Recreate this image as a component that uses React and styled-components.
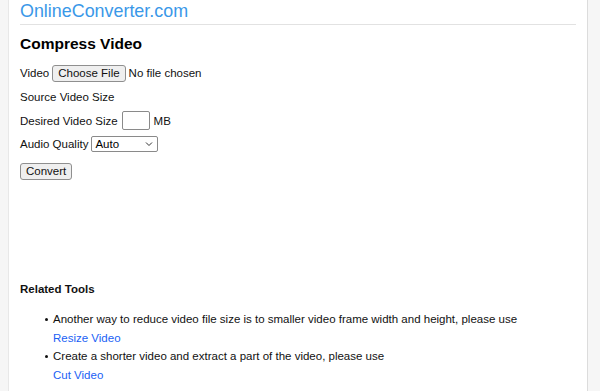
import React from "react";
import styled, { createGlobalStyle } from "styled-components";

const Global = createGlobalStyle`
  html, body { margin: 0; padding: 0; background: #f6f6f6; }
  body { font-family: "Liberation Sans", Arial, sans-serif; color: #111; }
  * { box-sizing: border-box; }
`;

const Page = styled.div`
  margin-left: 8px;
  width: 580px;
  min-height: 391px;
  background: #fff;
  border-left: 1px solid #e8e8e8;
  border-right: 1px solid #dcdcdc;
  padding: 0 11px;
`;

const Header = styled.header`
  height: 25px;
  border-bottom: 1px solid #e2e2e2;
  display: flex;
  align-items: center;
  padding-bottom: 2px;
`;

const Logo = styled.a`
  font-size: 17.9px;
  line-height: 22px;
  color: #3a98e8;
  text-decoration: none;
`;

const Title = styled.h2`
  margin: 9px 0 0;
  font-size: 15.5px;
  line-height: 20px;
  font-weight: bold;
  color: #000;
`;

const Form = styled.form`
  margin-top: 7px;
  display: flex;
  flex-direction: column;
`;

const Row = styled.div`
  display: flex;
  align-items: center;
  height: ${(p) => p.$h || 24}px;
  margin-top: ${(p) => p.$mt || 0}px;
  font-size: 11.5px;
  gap: 3px;
`;

const Btn = styled.button`
  font-family: "Liberation Sans", Arial, sans-serif;
  font-size: 11.5px;
  height: 17px;
  padding: 0 5px;
  background: #efefef;
  border: 1px solid #8f8f8f;
  border-radius: 3px;
  color: #111;
  display: inline-flex;
  align-items: center;
`;

const TextInput = styled.input`
  width: 28px;
  height: 19px;
  border: 1px solid #8a8a8a;
  border-radius: 2px;
  padding: 0;
  margin: 0 1px;
`;

const SelectWrap = styled.span`
  position: relative;
  display: inline-flex;
`;

const Select = styled.select`
  appearance: none;
  -webkit-appearance: none;
  width: 67px;
  height: 16px;
  border: 1px solid #8a8a8a;
  border-radius: 2px;
  background: #fff;
  font-family: "Liberation Sans", Arial, sans-serif;
  font-size: 11.5px;
  padding: 0 0 0 3px;
  color: #000;
`;

const Chevron = styled.svg`
  position: absolute;
  right: 5px;
  top: 5px;
  pointer-events: none;
`;

const Section = styled.section`
  margin-top: 96px;
`;

const SubTitle = styled.h3`
  margin: 0;
  font-size: 11.5px;
  line-height: 20px;
  font-weight: bold;
`;

const List = styled.ul`
  margin: 11px 0 0;
  padding-left: 33px;
  list-style: none;
  font-size: 11.5px;
  line-height: 18.67px;
`;

const Item = styled.li`
  position: relative;
  &::before {
    content: "";
    position: absolute;
    left: -8px;
    top: 8px;
    width: 3px;
    height: 3px;
    border-radius: 50%;
    background: #111;
  }
`;

const Link = styled.a`
  display: block;
  color: #1a5ff5;
  text-decoration: none;
`;

export default function App() {
  return (
    <>
      <Global />
      <Page>
        <Header>
          <Logo href="#">OnlineConverter.com</Logo>
        </Header>
        <Title>Compress Video</Title>
        <Form onSubmit={(e) => e.preventDefault()}>
          <Row>
            Video <Btn type="button">Choose File</Btn> No file chosen
          </Row>
          <Row>Source Video Size</Row>
          <Row $h={23}>
            Desired Video Size <TextInput type="text" /> MB
          </Row>
          <Row>
            Audio Quality
            <SelectWrap>
              <Select defaultValue="auto">
                <option value="auto">Auto</option>
              </Select>
              <Chevron width="8" height="6" viewBox="0 0 8 6">
                <path d="M1 1.5 L4 4.5 L7 1.5" fill="none" stroke="#333" strokeWidth="1" />
              </Chevron>
            </SelectWrap>
          </Row>
          <Row $mt={3}>
            <Btn type="submit">Convert</Btn>
          </Row>
        </Form>
        <Section>
          <SubTitle>Related Tools</SubTitle>
          <List>
            <Item>
              Another way to reduce video file size is to smaller video frame width and height, please use
              <Link href="#">Resize Video</Link>
            </Item>
            <Item>
              Create a shorter video and extract a part of the video, please use
              <Link href="#">Cut Video</Link>
            </Item>
          </List>
        </Section>
      </Page>
    </>
  );
}
